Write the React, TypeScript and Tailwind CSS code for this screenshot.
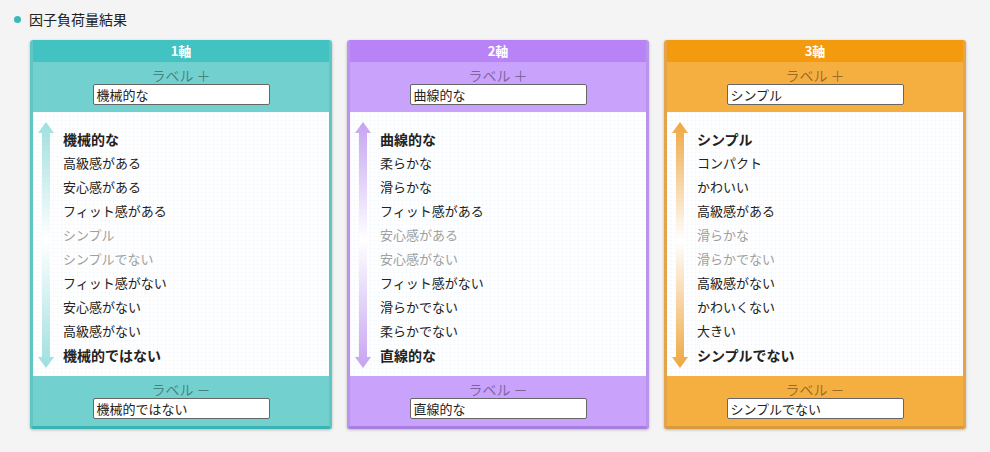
import React from "react";

type Axis = {
  title: string;
  plus: string;
  minus: string;
  items: string[];
  head: string;
  band: string;
  edge: string;
  bottom: string;
  arrow: string;
  id: string;
};

const axes: Axis[] = [
  {
    id: "a1",
    title: "1軸",
    plus: "機械的な",
    minus: "機械的ではない",
    items: ["高級感がある", "安心感がある", "フィット感がある", "シンプル", "シンプルでない", "フィット感がない", "安心感がない", "高級感がない"],
    head: "bg-[#42c3c1]",
    band: "bg-[#72d1cf]",
    edge: "border-[#5fc6c4]",
    bottom: "border-b-[#3ab4b3]",
    arrow: "#9fdfdf",
  },
  {
    id: "a2",
    title: "2軸",
    plus: "曲線的な",
    minus: "直線的な",
    items: ["柔らかな", "滑らかな", "フィット感がある", "安心感がある", "安心感がない", "フィット感がない", "滑らかでない", "柔らかでない"],
    head: "bg-[#b783f7]",
    band: "bg-[#c9a2fb]",
    edge: "border-[#b993ec]",
    bottom: "border-b-[#a97ee0]",
    arrow: "#c6a3f2",
  },
  {
    id: "a3",
    title: "3軸",
    plus: "シンプル",
    minus: "シンプルでない",
    items: ["コンパクト", "かわいい", "高級感がある", "滑らかな", "滑らかでない", "高級感がない", "かわいくない", "大きい"],
    head: "bg-[#f39a0e]",
    band: "bg-[#f5ae40]",
    edge: "border-[#e6a448]",
    bottom: "border-b-[#d99a3c]",
    arrow: "#efa73f",
  },
];

// which middle items are greyed out (index 3 and 4 of the inner list)
const faded = [3, 4];

const Arrow = ({ color, id }: { color: string; id: string }) => (
  <svg width="16" height="246" viewBox="0 0 16 246">
    <defs>
      <linearGradient id={id} x1="0" y1="0" x2="0" y2="1">
        <stop offset="0" stopColor={color} />
        <stop offset="0.48" stopColor="#ffffff" />
        <stop offset="1" stopColor={color} />
      </linearGradient>
    </defs>
    <path d="M8 0 L16 11 L12 11 L12 235 L16 235 L8 246 L0 235 L4 235 L4 11 L0 11 Z" fill={`url(#${id})`} />
  </svg>
);

const LabelBox = ({ label, value, band }: { label: string; value: string; band: string }) => (
  <div className={`${band} flex flex-col items-center pt-[5px] h-[50px]`}>
    <div className="text-[14px] leading-[16px] text-black/40">{label}</div>
    <div className="mt-[1px] w-[177px] h-[21px] bg-white border border-[#666] rounded-[2px] px-[3px] text-[13px] leading-[19px] text-[#222]">
      {value}
    </div>
  </div>
);

const Card = ({ a }: { a: Axis }) => (
  <div className={`w-[302px] rounded-[3px] border-x-[3px] border-b-[3px] ${a.edge} ${a.bottom} shadow-[0_1px_3px_rgba(0,0,0,0.25)] overflow-hidden`}>
    <div className={`${a.head} -mx-[3px] h-[22px] text-center text-white font-bold text-[13px] leading-[22px]`}>{a.title}</div>
    <LabelBox label="ラベル ＋" value={a.plus} band={a.band} />
    <div className="bg-white bg-[linear-gradient(rgba(200,220,230,0.1)_1px,transparent_1px),linear-gradient(90deg,rgba(200,220,230,0.1)_1px,transparent_1px)] bg-[length:4px_4px] h-[264px] flex pt-[10px]">
      <div className="pl-[5px] pr-[9px]">
        <Arrow color={a.arrow} id={a.id} />
      </div>
      <div className="pt-[5px] flex flex-col">
        <div className="h-[24px] leading-[24px] text-[14px] font-bold text-[#222]">{a.plus}</div>
        {a.items.map((t, i) => (
          <div key={i} className={`h-[24px] leading-[24px] text-[13px] ${faded.includes(i) ? "text-[#a0a0a0]" : "text-[#222]"}`}>
            {t}
          </div>
        ))}
        <div className="h-[24px] leading-[24px] text-[14px] font-bold text-[#222]">{a.minus}</div>
      </div>
    </div>
    <LabelBox label="ラベル －" value={a.minus} band={a.band} />
  </div>
);

export default function App() {
  return (
    <div className="w-[990px] h-[452px] bg-[#f4f4f4] overflow-hidden font-['Noto_Sans_CJK_JP','Noto_Sans',sans-serif]">
      <div className="flex items-center pl-[14px] pt-[9px] h-[30px]">
        <span className="w-[7px] h-[7px] rounded-full bg-[#3db8b6] mr-[8px]" />
        <span className="text-[14px] text-[#222]">因子負荷量結果</span>
      </div>
      <div className="flex gap-[15px] pl-[30px] pt-[10px]">
        {axes.map((a) => (
          <Card key={a.id} a={a} />
        ))}
      </div>
    </div>
  );
}
